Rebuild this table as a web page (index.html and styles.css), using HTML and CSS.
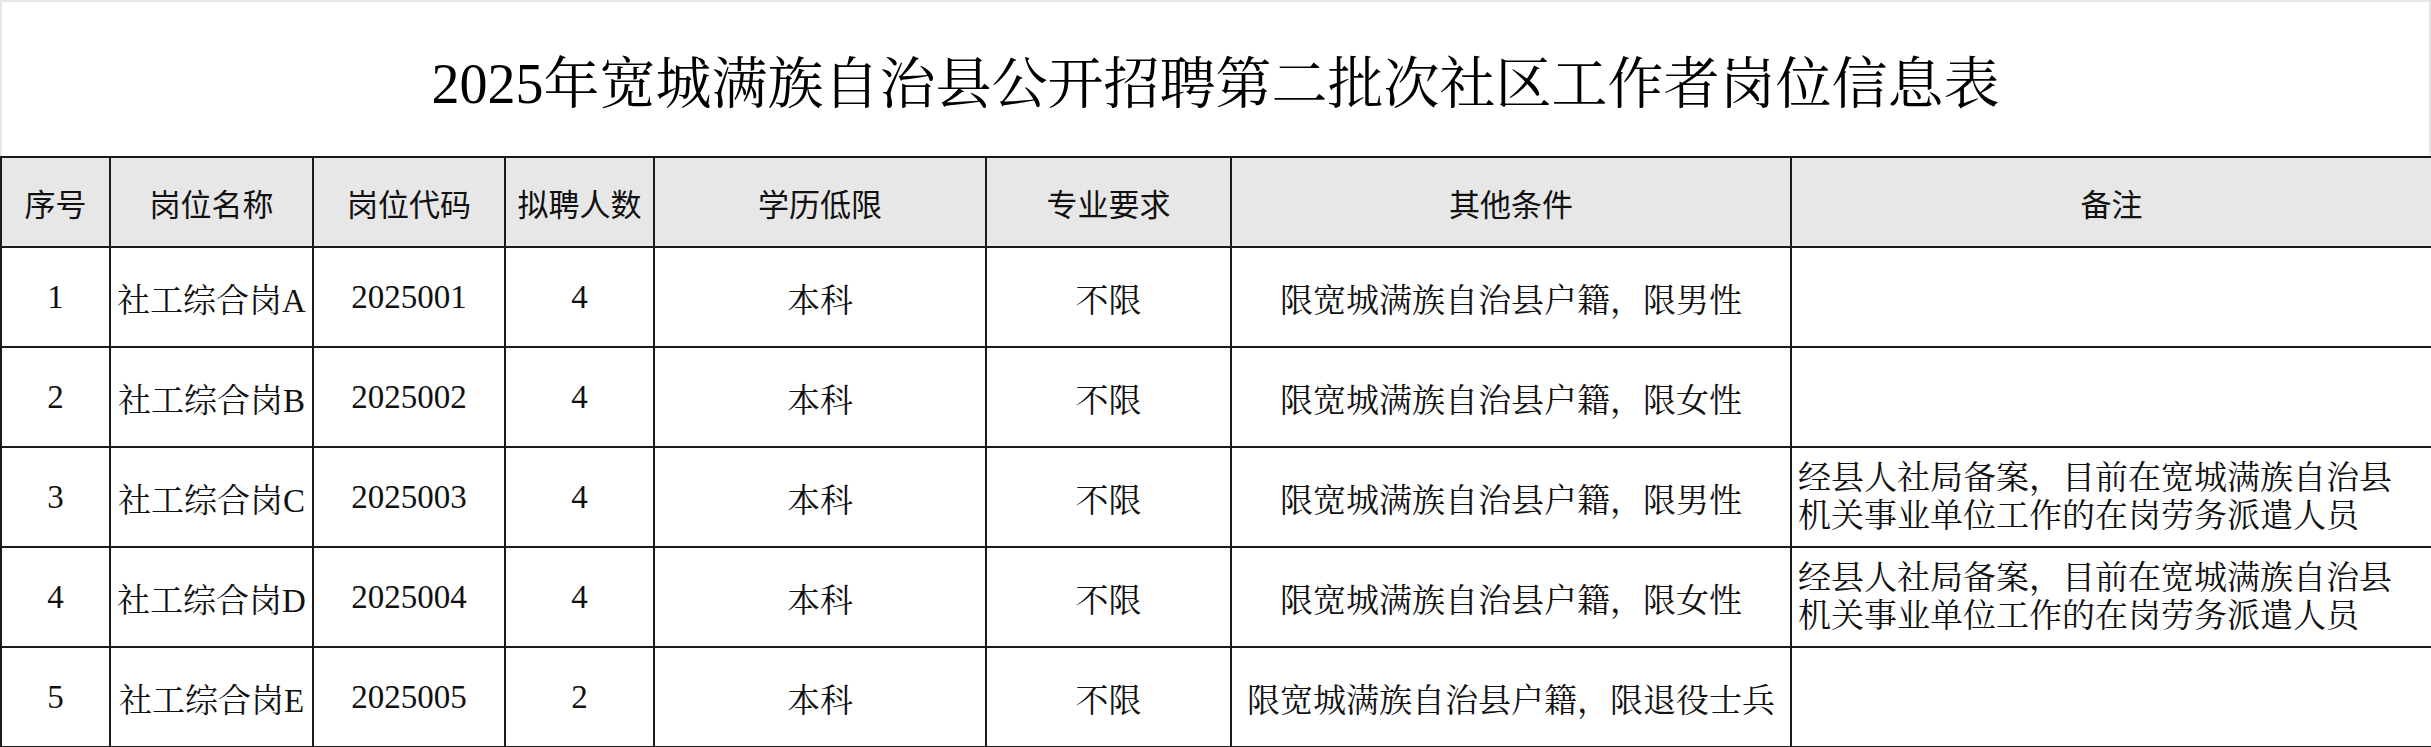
FILE: index.html
```html
<!DOCTYPE html>
<html lang="zh-CN">
<head>
<meta charset="utf-8">
<title>2025年宽城满族自治县公开招聘第二批次社区工作者岗位信息表</title>
<link rel="stylesheet" href="styles.css">
</head>
<body>
<div class="sheet">
  <div class="title-block">
    <h1 class="title">2025年宽城满族自治县公开招聘第二批次社区工作者岗位信息表</h1>
  </div>
  <table class="jobs">
    <colgroup>
      <col class="c-no">
      <col class="c-name">
      <col class="c-code">
      <col class="c-num">
      <col class="c-edu">
      <col class="c-major">
      <col class="c-other">
      <col class="c-note">
    </colgroup>
    <thead>
      <tr>
        <th>序号</th>
        <th>岗位名称</th>
        <th>岗位代码</th>
        <th>拟聘人数</th>
        <th>学历低限</th>
        <th>专业要求</th>
        <th>其他条件</th>
        <th>备注</th>
      </tr>
    </thead>
    <tbody>
      <tr>
        <td>1</td><td>社工综合岗A</td><td>2025001</td><td>4</td><td>本科</td><td>不限</td>
        <td>限宽城满族自治县户籍，限男性</td><td class="note"></td>
      </tr>
      <tr>
        <td>2</td><td>社工综合岗B</td><td>2025002</td><td>4</td><td>本科</td><td>不限</td>
        <td>限宽城满族自治县户籍，限女性</td><td class="note"></td>
      </tr>
      <tr>
        <td>3</td><td>社工综合岗C</td><td>2025003</td><td>4</td><td>本科</td><td>不限</td>
        <td>限宽城满族自治县户籍，限男性</td>
        <td class="note">经县人社局备案，目前在宽城满族自治县<br>机关事业单位工作的在岗劳务派遣人员</td>
      </tr>
      <tr>
        <td>4</td><td>社工综合岗D</td><td>2025004</td><td>4</td><td>本科</td><td>不限</td>
        <td>限宽城满族自治县户籍，限女性</td>
        <td class="note">经县人社局备案，目前在宽城满族自治县<br>机关事业单位工作的在岗劳务派遣人员</td>
      </tr>
      <tr>
        <td>5</td><td>社工综合岗E</td><td>2025005</td><td>2</td><td>本科</td><td>不限</td>
        <td>限宽城满族自治县户籍，限退役士兵</td><td class="note"></td>
      </tr>
    </tbody>
  </table>
</div>
</body>
</html>
```

FILE: styles.css
```css
html, body {
  margin: 0;
  padding: 0;
  background: #ffffff;
}

.sheet {
  width: 2431px;
  color: #111111;
}

.title-block {
  height: 156px;
  box-sizing: border-box;
  border-top: 2px solid #e6e6e6;
  border-left: 2px solid #e6e6e6;
  border-right: 2px solid #e6e6e6;
  display: flex;
  align-items: center;
  justify-content: center;
  padding-top: 10px;
}

.title {
  margin: 0;
  font-family: "Liberation Serif", "Noto Serif CJK SC", "Noto Sans CJK SC", serif;
  font-weight: normal;
  font-size: 56px;
  line-height: 1;
  color: #000000;
  white-space: nowrap;
}

.jobs {
  width: 2431px;
  table-layout: fixed;
  border-collapse: collapse;
}

.c-no { width: 109px; }
.c-name { width: 203px; }
.c-code { width: 192px; }
.c-num { width: 149px; }
.c-edu { width: 332px; }
.c-major { width: 245px; }
.c-other { width: 560px; }
.c-note { width: 641px; }

.jobs th,
.jobs td {
  border: 2px solid #1a1a1a;
  padding: 0;
  text-align: center;
  vertical-align: middle;
  white-space: nowrap;
  overflow: hidden;
}

.jobs th {
  height: 88px;
  background: #e7e7e7;
  font-family: "Noto Sans CJK SC", sans-serif;
  font-weight: normal;
  font-size: 31px;
  color: #111111;
}

.jobs td {
  height: 98px;
  font-family: "Liberation Serif", "Noto Serif CJK SC", "Noto Sans CJK SC", serif;
  font-size: 33px;
  color: #111111;
}

.jobs td.note {
  text-align: left;
  padding-left: 6px;
  line-height: 38px;
}
```
